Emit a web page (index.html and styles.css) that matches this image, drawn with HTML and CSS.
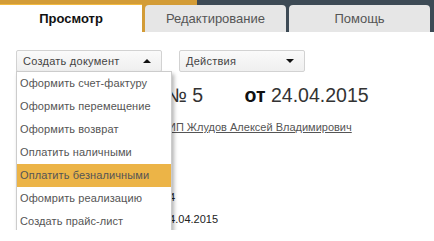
FILE: index.html
```html
<!DOCTYPE html>
<html lang="ru">
<head>
  <meta charset="UTF-8">
  <title>Документ</title>
  <link rel="stylesheet" href="styles.css">
</head>
<body>
  <header class="tabs">
    <a class="tab active">Просмотр</a>
    <a class="tab">Редактирование</a>
    <a class="tab">Помощь</a>
  </header>

  <main class="content">
    <div class="toolbar">
      <div class="dropdown">
        <button class="select open">Создать документ <span class="caret up"></span></button>
        <ul class="menu">
          <li>Оформить счет-фактуру</li>
          <li>Оформить перемещение</li>
          <li>Оформить возврат</li>
          <li>Оплатить наличными</li>
          <li class="hover">Оплатить безналичными</li>
          <li>Офомрить реализацию</li>
          <li>Создать прайс-лист</li>
        </ul>
      </div>
      <button class="select actions">Действия <span class="caret"></span></button>
    </div>

    <div class="doc">
      <h1 class="doc-title"><span class="num">№ 5</span> <b>от</b> 24.04.2015</h1>
      <a class="doc-party" href="#">ИП Жлудов Алексей Владимирович</a>
      <div class="doc-rows">
        <div class="row">24</div>
        <div class="row">24.04.2015</div>
      </div>
    </div>
  </main>
</body>
</html>
```

FILE: styles.css
```css
body {
  margin: 0;
  font-family: "Liberation Sans", Arial, sans-serif;
  background: #fff;
  color: #333;
}
.tabs {
  display: flex;
  gap: 3px;
  height: 32px;
  padding-top: 4px;
  box-sizing: border-box;
  background: linear-gradient(to right, #d39c37 197px, #3d4a55 197px);
}
.tab {
  width: 141px;
  display: flex;
  align-items: center;
  justify-content: center;
  font-size: 13px;
  color: #555;
  background: #e6e6e6;
  border-radius: 4px 4px 0 0;
  margin-top: 1px;
}
.tab.active {
  width: 142px;
  margin-top: 0;
  background: #fff;
  color: #111;
  font-weight: bold;
  border-radius: 0;
  border-top: 1px solid #f2b93f;
}
.content {
  padding: 18px 16px 0;
}
.toolbar {
  display: flex;
  gap: 17px;
}
.dropdown {
  position: relative;
}
.select {
  display: flex;
  align-items: center;
  justify-content: space-between;
  height: 22px;
  padding: 0 10px 0 6px;
  border: 1px solid #d2d2d2;
  border-radius: 2px;
  background: linear-gradient(#fafafa, #efefef);
  font-family: inherit;
  font-size: 11px;
  letter-spacing: 0.25px;
  color: #444;
  box-sizing: border-box;
}
.dropdown .select {
  width: 146px;
}
.actions {
  width: 126px;
}
.caret {
  width: 0;
  height: 0;
  border-left: 4px solid transparent;
  border-right: 4px solid transparent;
  border-top: 4px solid #111;
}
.caret.up {
  border-top: none;
  border-bottom: 4px solid #111;
}
.menu {
  position: absolute;
  top: 21px;
  left: 0;
  width: 156px;
  margin: 0;
  padding: 0;
  list-style: none;
  background: #fff;
  border: 1px solid #ccc;
  box-shadow: 2px 3px 4px rgba(0, 0, 0, 0.3);
  z-index: 10;
  box-sizing: border-box;
}
.menu li {
  height: 23px;
  line-height: 23px;
  padding-left: 3px;
  font-size: 11px;
  letter-spacing: 0.1px;
  color: #555;
  white-space: nowrap;
}
.menu li.hover {
  background: #ecb447;
}
.doc {
  padding-left: 150px;
}
.doc-title {
  margin: 11px 0 0;
  font-size: 19.5px;
  font-weight: normal;
  line-height: 24px;
  color: #333;
}
.doc-title .num {
  margin-right: 36px;
}
.doc-title b {
  color: #111;
}
.doc-party {
  display: inline-block;
  margin-top: 14px;
  margin-left: 2px;
  font-size: 11px;
  color: #555;
}
.doc-rows {
  margin-top: 51px;
}
.row {
  display: flex;
  height: 22px;
  align-items: center;
  margin-left: -3px;
  font-size: 11px;
  color: #222;
}
```
